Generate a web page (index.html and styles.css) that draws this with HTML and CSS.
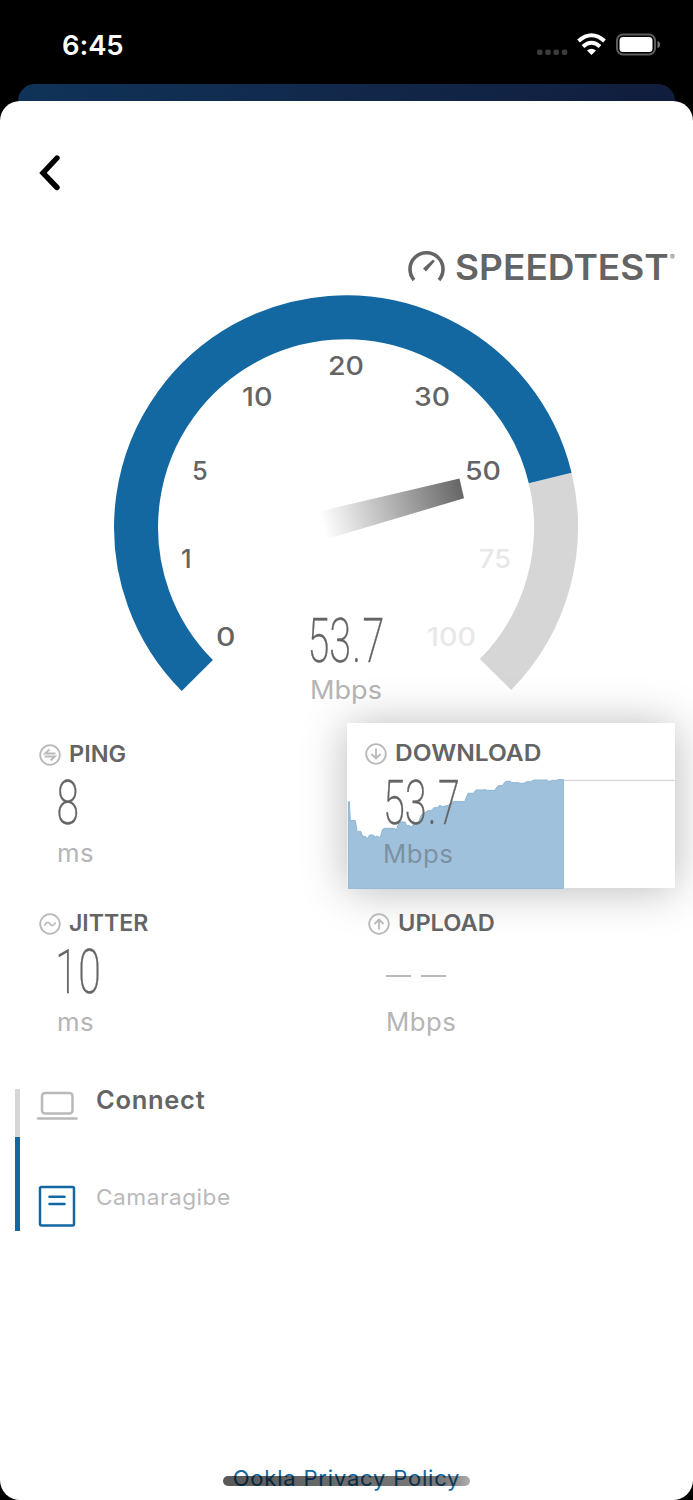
FILE: index.html
```
<!DOCTYPE html>
<html lang="en">
<head>
<meta charset="utf-8">
<title>Speedtest</title>
<link rel="stylesheet" href="styles.css">
</head>
<body>
<div class="phone">
  <header class="status">
    <span class="time">6:45</span>
    <svg class="status-icons" width="126" height="24" viewBox="0 0 126 24">
      <g fill="#3c3c3c"><rect x="1" y="16.500" width="5.500" height="5.500" rx="2"/><rect x="9.200" y="16.500" width="5.500" height="5.500" rx="2"/><rect x="17.500" y="16.500" width="5.500" height="5.500" rx="2"/><rect x="25.800" y="16.500" width="5.500" height="5.500" rx="2"/></g>
      <g fill="none" stroke="#fff" stroke-width="4"><path d="M42.500 8Q55.500-3.500 68.500 8"/><path d="M47 13.500Q55.500 6 64 13.500"/></g>
      <path d="M51 17.500Q55.500 14 60 17.500L55.500 22Z" fill="#fff"/>
      <rect x="81" y="1.500" width="38" height="20" rx="6" fill="none" stroke="#5c5c5c" stroke-width="2"/>
      <rect x="83.500" y="4" width="33" height="15" rx="3.500" fill="#fff"/>
      <path d="M121.500 8Q124 8.500 124 11.500T121.500 15Z" fill="#777"/>
    </svg>
  </header>
  <div class="back-card"></div>
  <main class="sheet">
    <nav class="nav"><svg width="24" height="36" viewBox="0 0 24 36"><path d="M18 3L4 18 18 32.500" fill="none" stroke="#000" stroke-width="5.400" stroke-linecap="round" stroke-linejoin="miter"/></svg></nav>
    <div class="brand">
      <svg width="38" height="34" viewBox="0 0 38 34"><path d="M7 30A16.500 16.500 0 1 1 32 30" fill="none" stroke="#646464" stroke-width="3.600"/><path d="M16 18.500L26 9.500 27.800 11.200 19 21.500Z" fill="#646464"/></svg>
      <span class="brand-name">SPEEDTEST</span><span class="reg">®</span>
    </div>
    <svg class="gauge" width="693" height="430" viewBox="0 290 693 430">
      <defs><linearGradient id="needle" gradientUnits="userSpaceOnUse" x1="323" y1="526" x2="462" y2="489"><stop offset="0" stop-color="#fff"/><stop offset="1" stop-color="#666"/></linearGradient></defs>
      <path class="arc rest" d="M550.200 478A210 210 0 0 1 495.500 674.500"/>
      <path class="arc done" d="M197.300 675.500A210 210 0 1 1 550.200 478"/>
      <path d="M321 511L459.500 478.500 464 498.300 327 539Z" fill="url(#needle)"/>
      <g class="ticks">
        <text x="216" y="645.500" textLength="19.500" lengthAdjust="spacingAndGlyphs">0</text>
        <text x="181" y="568">1</text>
        <text x="192" y="480">5</text>
        <text x="242" y="405.500" textLength="30.500" lengthAdjust="spacingAndGlyphs">10</text>
        <text x="328" y="375" textLength="36" lengthAdjust="spacingAndGlyphs">20</text>
        <text x="414" y="405.500" textLength="36" lengthAdjust="spacingAndGlyphs">30</text>
        <text x="465" y="480" textLength="36" lengthAdjust="spacingAndGlyphs">50</text>
        <text class="off" x="479" y="568" textLength="32" lengthAdjust="spacingAndGlyphs">75</text>
        <text class="off" x="427" y="645.500" textLength="49" lengthAdjust="spacingAndGlyphs">100</text>
      </g>
      <text class="value" transform="translate(307.500 662) scale(.64 1)" x="0 34 70 86">53.7</text>
      <text class="unit-main" x="310" y="698.500" textLength="72" lengthAdjust="spacingAndGlyphs">Mbps</text>
    </svg>
    <section class="metrics">
      <article class="metric">
        <h2 class="label"><svg width="22" height="22" viewBox="0 0 22 22"><circle cx="11" cy="11" r="9.800"/><path d="M16.500 9.500H6L10.500 5.500M5.500 12.500H16L11.500 16.500"/></svg><span class="t-ping">PING</span></h2>
        <svg class="number" width="90" height="50"><text class="value" transform="translate(-1.500 47) scale(.66 1)">8</text></svg>
        <p class="unit">ms</p>
      </article>
      <article class="metric active">
        <svg class="chart" width="328" height="166" viewBox="51 39 984 498">
          <path class="cap" d="M700 211H1035"/>
          <path class="area" d="M55 535V275H58L61 332H76L82 368 86 364H92L98 379H106L112 387 119 375H130L136 381 141 378 147 382H151L158 358 165 355H193L199 361 206 339 213 336H225L231 347H238L245 351 252 340 265 339 273 316 284 309 294 302H303L312 293H322L329 286 338 290 355 286 368 275H404L414 250 430 250 438 240H456L467 239 472 241H494L504 227H517L527 214H542L545 218H565L571 220 582 220 590 215H602L612 210H652L657 215 667 211H679L683 209H700V535Z"/>
        </svg>
        <h2 class="label"><svg width="22" height="22" viewBox="0 0 22 22"><circle cx="11" cy="11" r="9.800"/><path d="M11 5.500V15.500M6.500 11L11 15.500 15.500 11"/></svg><span class="t-download">DOWNLOAD</span></h2>
        <svg class="number" width="90" height="50"><text class="value" transform="translate(-1 48) scale(.64 1)" x="0 34 70 86">53.7</text></svg>
        <p class="unit">Mbps</p>
      </article>
      <article class="metric">
        <h2 class="label"><svg width="22" height="22" viewBox="0 0 22 22"><circle cx="11" cy="11" r="9.800"/><path d="M5.500 12.500C7.500 8 9.500 9 11 11S14.500 14 16.500 9.500"/></svg><span class="t-jitter">JITTER</span></h2>
        <svg class="number" width="90" height="50"><text class="value" transform="translate(-1.500 47) scale(.66 1)" x="-2 33">10</text></svg>
        <p class="unit">ms</p>
      </article>
      <article class="metric upload">
        <h2 class="label"><svg width="22" height="22" viewBox="0 0 22 22"><circle cx="11" cy="11" r="9.800"/><path d="M11 16.500V6.500M6.500 11L11 6.500 15.500 11"/></svg><span class="t-upload">UPLOAD</span></h2>
        <div class="number dashes"><i></i><i></i></div>
        <p class="unit">Mbps</p>
      </article>
    </section>
    <section class="route">
      <div class="rail"><i></i><b></b></div>
      <div class="stops">
        <div class="stop first"><svg width="42" height="32" viewBox="0 0 42 32"><rect x="6" y="3" width="30.500" height="20.500" rx="3"/><path d="M2 28.500H40.500"/></svg><span class="host">Connect</span></div>
        <div class="stop"><svg class="server" width="42" height="43" viewBox="0 0 42 43"><rect x="4" y="3" width="34" height="38.500" rx="1.500"/><path d="M13.500 12.800H28.500M13.500 20H28.500"/></svg><span class="place">Camaragibe</span></div>
      </div>
    </section>
    <footer class="footer"><a class="policy">Ookla Privacy Policy</a><div class="home"></div></footer>
  </main>
</div>
</body>
</html>
```
FILE: styles.css
```
* { box-sizing: border-box; }
body { margin: 0; background: #000; font-family: Inter, "Liberation Sans", sans-serif; color: #646464; }
.phone { width: 693px; height: 1500px; overflow: hidden; display: flex; flex-direction: column; background: #000; }
.status { height: 84px; padding: 5px 31px 0 62px; display: flex; align-items: center; justify-content: space-between; flex: none; }
.time { font-size: 27.500px; font-weight: 600; color: #fff; letter-spacing: -.1px; }
.back-card { height: 17px; flex: none; margin: 0 18px; border-radius: 17px 17px 0 0; background: linear-gradient(90deg, #0f3358, #11284a 50%, #111d3d); }
.sheet { height: 1399px; flex: none; background: #fff; border-radius: 20px; overflow: hidden; display: flex; flex-direction: column; }
.nav { height: 144px; padding: 54px 0 0 39px; flex: none; }
.brand { height: 45px; padding: 5px 0 0 407px; display: flex; align-items: flex-start; flex: none; }
.brand-name { margin-left: 10px; font-size: 35px; line-height: 34px; font-weight: 600; width: 215px; white-space: nowrap; transform: scaleX(1.058); transform-origin: left; }
.reg { font-size: 7px; line-height: 16px; }
.gauge { display: block; flex: none; }
.arc { fill: none; stroke-width: 44; }
.rest { stroke: #d6d6d6; }
.done { stroke: #1468a2; }
.ticks { font-size: 25.500px; font-weight: 500; fill: #646464; }
.off { fill: #e8e8e8; }
.value { font-family: Roboto, sans-serif; font-size: 62px; font-weight: 200; fill: #646464; stroke: #646464; stroke-width: .4; }
.unit-main { font-size: 25px; fill: #b5b5b5; }
.metrics { margin: 3px 18px 0 19px; display: grid; grid-template-columns: 328px 328px; grid-auto-rows: 165px; row-gap: 4px; flex: none; }
.metric { position: relative; padding: 21px 0 0 20px; }
.active { padding: 20px 0 0 18px; background: #fff; box-shadow: 0 2px 42px rgba(0, 0, 0, .28); }
.upload { padding-left: 21px; }
.label { margin: 0; display: flex; align-items: center; height: 22px; font-size: 22.500px; font-weight: 600; position: relative; }
.label svg { fill: none; stroke: #b9b9b9; stroke-width: 1.800; margin-right: 8px; }
.label span { line-height: 20px; padding-bottom: 2px; transform-origin: left; }
.t-ping { transform: scaleX(1.045); }
.t-jitter { transform: scaleX(1.025); }
.t-download { transform: scaleX(1.09); }
.t-upload { transform: scaleX(1.05); }
.number { display: block; height: 50px; margin: 11px 0 0 19px; position: relative; overflow: visible; }
.dashes { display: flex; gap: 10px; padding-top: 29px; margin-left: 18px; }
.dashes i { width: 25px; height: 2px; background: #b9b9b9; }
.unit { margin: 10px 0 0 18px; font-size: 25px; line-height: 32px; color: #b5b5b5; position: relative; letter-spacing: .5px; transform: scaleX(1.03); transform-origin: left; }
.active .unit { color: #7b91a3; margin-top: 12px; }
.chart { position: absolute; left: 0; top: 0; }
.area { fill: #a0c1db; stroke: #8bb5d5; stroke-width: 3; }
.cap { stroke: #ccc; stroke-width: 3; }
.route { display: flex; margin: 32px 0 0 15px; height: 142px; flex: none; }
.rail { width: 5px; display: flex; flex-direction: column; }
.rail i { height: 48px; background: #d6d6d6; }
.rail b { flex: 1; background: #1468a2; }
.stops { padding-left: 16px; }
.stop { display: flex; }
.first { height: 95px; padding-top: 1px; }
.stop svg { fill: none; stroke: #b9b9b9; stroke-width: 2.500; stroke-linecap: round; margin-right: 18px; }
.stop .server { stroke: #1468a2; }
.host { font-size: 25.500px; font-weight: 600; line-height: 19px; letter-spacing: .7px; }
.place { font-size: 22px; line-height: 26px; color: #b9b9b9; letter-spacing: .5px; transform: scaleX(1.03); transform-origin: left; }
.footer { position: relative; margin-top: auto; height: 36px; display: flex; justify-content: center; flex: none; }
.policy { font-size: 22px; line-height: 28px; color: #1468a2; white-space: nowrap; letter-spacing: .8px; }
.home { position: absolute; left: 223px; top: 12px; width: 247px; height: 10px; border-radius: 5px; background: linear-gradient(90deg, rgba(0,0,0,.65), rgba(0,0,0,.52) 90%, rgba(0,0,0,.32)); }
```
